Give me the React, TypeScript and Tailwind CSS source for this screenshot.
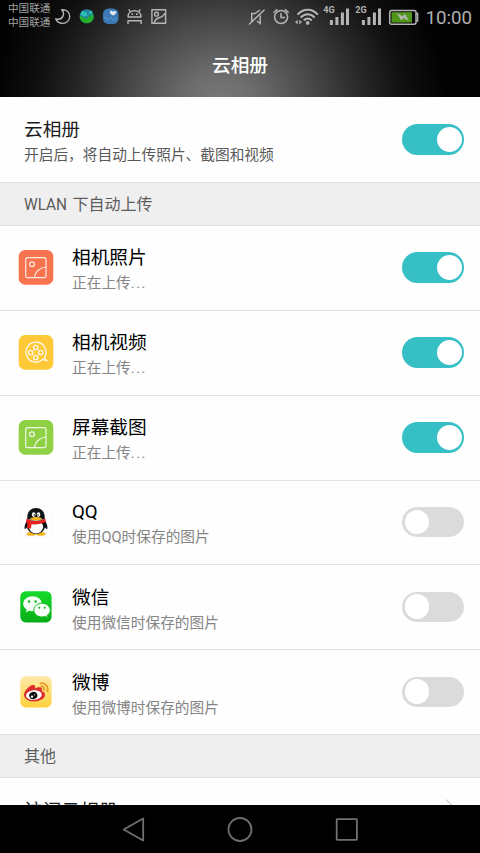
import type { ReactNode } from "react";

const CJK = "font-['Roboto','Noto_Sans_CJK_SC',sans-serif]";

function StatusBar() {
  return (
    <div className="flex h-[33px] items-start text-[#b0b0b0]">
      <div className="ml-2 w-[44px] pt-[1.500px] text-[10.600px] leading-[14.500px] whitespace-nowrap text-[#a2a2a2]">
        <div>中国联通</div>
        <div>中国联通</div>
      </div>
      <svg className="block h-[33px] w-[128px] shrink-0" viewBox="52 0 128 33" fill="none" stroke="#b5b5b5" strokeWidth="1.4" strokeLinejoin="round">
        <path d="M61.700 9.800c4.700-.5 8 2.400 8 6.600a6.900 6.900 0 0 1-7 7c-3.300 0-6-1.600-7-4.600 3.200 1 6-.1 7.200-2.400 1.100-2.200.6-4.700-1.200-6.600z" />
        <g stroke="none">
          <circle cx="86.700" cy="16.200" r="7" fill="#2484a5" />
          <path d="M80 16l3.500 1.500 2.500 1.500 6.500-5 1.200 3c-.3 3.500-3 6.200-7 6.200-3.500 0-6.200-2.500-6.900-5.500z" fill="#22b02c" />
          <path d="M82 11l4.500 1.500 1 3-3.500 1-3.500-2zM89 11.500l2.500-1 1 2.500-3 1.500z" fill="#2cc0b0" />
          <rect x="103" y="8.500" width="15.500" height="15.500" rx="5.500" fill="#3a79b6" />
          <path d="M113 15.500c-4-2-3.800-4.700-1.800-4.700 1 0 1.500.6 1.800 1 .4-.5 1-1 2-.9 2.300.3 1.700 3.200-2 4.600z" fill="#dce8ec" />
        </g>
        <path d="M104 18l2-1 2 3 3-3 2 4 2-3 2.500 2" stroke="#629fce" strokeWidth=".7" />
        <path d="M128.100 17v-.7c0-3.500 2.800-5.500 6.400-5.500s6.400 2 6.400 5.500v.7zM130.300 11.800l-1.500-2.400M138.700 11.800l1.500-2.400M128 24v-3.300h13.200V24" />
        <path d="M131.500 14.200h1.500M136 14.200h1.500" strokeWidth="1.700" />
        <path d="M151.900 9.700h13.700v13.600h-13.700zM154.300 23c.5-3.300 1.800-4.500 4.800-5.300 3.300-.8 4.800-2.300 6.300-4.600" />
        <circle cx="156.500" cy="14.200" r="1.900" />
      </svg>
      <svg className="ml-auto block h-[33px] w-[180px] shrink-0" viewBox="244 0 180 33" fill="none" stroke="#b5b5b5" strokeWidth="1.500">
        <path d="M254 20.500h-2.300v-7h3.300l5-3.500M260.200 15.500v8l-3.200-2.500M249 24.500L264.500 9.700" />
        <circle cx="281.100" cy="17" r="6.500" />
        <path d="M281 13v4.500h4M273.500 12.700l3.700-3.400M285 9.300l3.700 3.400" />
        <path d="M297.500 14.700c5.700-6.700 14.700-6.700 20.400 0M300.700 17.600c4-4.500 10-4.500 14 0M303.700 20.500c2.500-2.500 5.600-2.500 8.100 0" strokeWidth="2" />
        <circle cx="307.700" cy="22.900" r="1.900" fill="#b5b5b5" stroke="none" />
        <path d="M297.700 19.800v4.600L295 22.100zM299.300 19.800v4.600l2.700-2.300z" fill="#b5b5b5" stroke="none" />
        <g fill="#b5b5b5" stroke="none">
          <rect x="329.900" y="20" width="3" height="5" /><rect x="335.400" y="17" width="3" height="8" /><rect x="340.900" y="12.500" width="3" height="12.500" /><rect x="346" y="8.500" width="3" height="16.500" />
          <rect x="361.900" y="20" width="3" height="5" /><rect x="367.400" y="17" width="3" height="8" /><rect x="372.900" y="12.500" width="3" height="12.500" /><rect x="378" y="8.500" width="3" height="16.500" />
          <text x="323.300" y="12.500" fontSize="9" fontWeight="700">4G</text>
          <text x="355.300" y="12.500" fontSize="9" fontWeight="700">2G</text>
        </g>
        <rect x="389.700" y="10.500" width="26.300" height="13.700" rx="2" />
        <path d="M416 13.500h1.700v7.500H416" strokeWidth="1.300" />
        <rect x="391.500" y="12.200" width="20.500" height="10.300" fill="#4e9718" stroke="none" />
        <path d="M396.500 13l6.500 3.500 1.700-3 4.300 7.500-5.500-3-2 2.500z" fill="#b5b5b5" stroke="none" />
      </svg>
      <div className="w-[56px] pt-[6px] pl-[1.500px] text-[18.700px] leading-[24px]">10:00</div>
    </div>
  );
}

function Toggle({ on }: { on?: boolean }) {
  return (
    <div className={`mr-4 flex w-[62px] shrink-0 items-center rounded-full px-[2.500px] ${on ? "h-[31px] justify-end bg-[#36bfc5]" : "h-[30px] justify-start bg-[#dbdbdb]"}`}>
      <div className="h-[24.500px] w-[24.500px] rounded-full bg-white" />
    </div>
  );
}

function Picture() {
  return (
    <g fill="none" stroke="#fff" strokeOpacity=".85" strokeWidth="1.200">
      <rect x="7.700" y="7.700" width="20.300" height="20" rx="1.700" />
      <circle cx="14" cy="14.200" r="2.400" />
      <path d="M16.300 27.500c.8-5.500 5.200-9.800 11.500-10.500" />
    </g>
  );
}

const icons: Record<string, ReactNode> = {
  photo: <><rect x=".7" y=".1" width="34.600" height="34.600" rx="6.500" fill="#f8734e" /><Picture /></>,
  shot: <><rect x=".7" y=".1" width="34.600" height="34.600" rx="6.500" fill="#8fd144" /><Picture /></>,
  video: (
    <>
      <rect x=".7" y=".1" width="34.600" height="34.600" rx="6.500" fill="#ffc837" />
      <g fill="none" stroke="#fff" strokeOpacity=".9" strokeWidth="1.300">
        <path d="M28.700 25.600c-1.500 0-2.700-.5-3.700-1.300a10 10 0 1 1 1.500-1.900c.5 1.200 1.300 2.400 2.200 3.200z" />
        <circle cx="17.700" cy="12.500" r="2.200" /><circle cx="17.700" cy="22.500" r="2.200" />
        <circle cx="12.700" cy="17.500" r="2.200" /><circle cx="22.700" cy="17.500" r="2.200" />
      </g>
    </>
  ),
  qq: (
    <>
      <rect x="2.700" y="1.500" width="30.700" height="30.500" rx="6" fill="#fefefe" stroke="#f3f3f3" strokeWidth=".7" />
      <ellipse cx="13.300" cy="28.900" rx="4.700" ry="1.800" fill="#f6b51d" />
      <ellipse cx="22.700" cy="28.900" rx="4.700" ry="1.800" fill="#f6b51d" />
      <path d="M9.300 15.500c-2 2.500-3.300 6-2.600 8.500.7.300 1.800-.7 2.400-1.700.8 4.200 4.500 6.600 8.900 6.600s8.100-2.400 8.900-6.600c.6 1 1.700 2 2.400 1.700.7-2.500-.6-6-2.600-8.500z" fill="#101417" />
      <ellipse cx="18" cy="22" rx="7.100" ry="6.400" fill="#fff" />
      <path d="M9.300 14.500C8.700 7 12.300 3 18 3s9.300 4 8.700 11.500z" fill="#101417" />
      <path d="M8.700 13.500c5.500 3.400 13 3.400 18.600 0l.6 3.300c-5 2.500-9.800 3-14.400 2.500l-.5 4.300-4-.3.500-5.200-1.700-1z" fill="#e7221c" />
      <ellipse cx="15.700" cy="9.600" rx="1.800" ry="2.300" fill="#fff" /><ellipse cx="20.500" cy="9.600" rx="1.800" ry="2.300" fill="#fff" />
      <circle cx="16.300" cy="10" r=".8" fill="#111" /><circle cx="20" cy="10" r=".8" fill="#111" />
      <path d="M12 13.500c3-2 9-2 12 0-2.300 2.600-9.700 2.600-12 0z" fill="#f6b51d" />
    </>
  ),
  wechat: (
    <>
      <defs><linearGradient id="wx" x2="0" y2="1"><stop stopColor="#16da2b" /><stop offset="1" stopColor="#06ad16" /></linearGradient></defs>
      <rect x="2.300" y="1.200" width="31.300" height="31.200" rx="5.500" fill="url(#wx)" />
      <path d="M14.500 6.300c-5 0-9.300 3.300-9.300 7.500 0 2.500 1.300 4.500 3.500 5.900l-.8 2.700 3-1.600c1.200.3 2.300.5 3.600.5 5.200 0 9.300-3.300 9.300-7.500s-4.100-7.500-9.300-7.500z" fill="#f6fff6" />
      <path d="M24 13.200c-4.500 0-8.200 3-8.200 6.900s3.700 6.900 8.200 6.900c1.100 0 2.200-.2 3.200-.5l2.500 1.300-.7-2.200c2-1.300 3.300-3.300 3.300-5.500 0-3.900-3.800-6.900-8.300-6.900z" fill="#f6fff6" stroke="#10bd20" strokeWidth="1" />
      <g fill="#0bb51b"><circle cx="11" cy="11.500" r="1.200" /><circle cx="17.600" cy="11.500" r="1.200" /><circle cx="21.300" cy="17.800" r="1" /><circle cx="26.700" cy="17.800" r="1" /></g>
    </>
  ),
  weibo: (
    <>
      <defs><linearGradient id="wb" x2="0" y2="1"><stop stopColor="#ffe9a9" /><stop offset="1" stopColor="#ffd13d" /></linearGradient></defs>
      <rect x="2.300" y="1.200" width="31.300" height="31.200" rx="5.500" fill="url(#wb)" />
      <path d="M6 19.500c0-3.500 6.800-11 10.300-9.200 1.200.7.900 2 .5 3.200 2.700-1.200 6-1.700 6.900-.2.500.9.300 1.800-.1 2.900 2.200.5 3.400 1.800 3.400 3.600 0 4-5 6.600-11.300 6.600C10 26.400 6 23.700 6 19.500z" fill="#dc2c2c" />
      <ellipse cx="15.900" cy="20.100" rx="7.900" ry="4.800" fill="#fff" transform="rotate(-6 15.900 20.100)" />
      <ellipse cx="15.300" cy="20.500" rx="4.100" ry="3.600" fill="#090909" transform="rotate(-15 15.300 20.500)" />
      <circle cx="14" cy="21.600" r="1.200" fill="#fff" /><circle cx="16.600" cy="19.800" r=".6" fill="#fff" />
      <path d="M22.500 8.300c4.700-.7 8.300 3.300 6.900 7.900M23 11.500c2.300-.3 3.700 1.500 3.100 3.700" fill="none" stroke="#e99a20" strokeWidth="1.700" strokeLinecap="round" />
    </>
  ),
};

interface RowProps {
  icon: string;
  title: string;
  sub: string;
  on?: boolean;
  size: string;
  iconTop?: string;
  textTop?: string;
  toggleBox?: string;
}

function Row({ icon, title, sub, on, size, iconTop = "mt-6", textTop = "pt-[19px]", toggleBox = "h-[83px]" }: RowProps) {
  return (
    <div className={`flex shrink-0 border-[#e4e4e4] ${size}`}>
      <svg className={`ml-[18px] block h-[36px] w-[36px] shrink-0 ${iconTop}`} viewBox="0 0 36 36">{icons[icon]}</svg>
      <div className={`ml-[18px] flex-1 whitespace-nowrap ${textTop}`}>
        <div className="text-[18.700px] leading-[26px] text-black">{title}</div>
        <div className="text-[14.700px] leading-[24px] text-[#858585]">
          {sub}
          {on && <span className="tracking-[1.500px]">...</span>}
        </div>
      </div>
      <div className={`flex items-center ${toggleBox}`}><Toggle on={on} /></div>
    </div>
  );
}

function Section({ children }: { children: ReactNode }) {
  return (
    <div className="h-[44px] shrink-0 border-y border-t-[#dedede] border-b-[#e4e4e4] bg-[#efefef] pt-px pl-6 text-[16px] leading-[42px] text-[#5c5c5c]">
      {children}
    </div>
  );
}

export default function App() {
  return (
    <div className={`flex h-[853px] w-[480px] flex-col overflow-hidden bg-[#fefefe] ${CJK}`}>
      <header className="h-[97px] shrink-0 bg-black bg-[radial-gradient(ellipse_210px_190px_at_46%_108%,#7a7a7a_0%,#6b6b6b_18%,#4b4b4b_42%,#272727_68%,#0f0f0f_88%,#020202_108%)]">
        <StatusBar />
        <h1 className="pt-[18px] text-center text-[18.700px] leading-[30px] font-medium text-white">云相册</h1>
      </header>
      <main className="flex min-h-0 flex-1 flex-col overflow-hidden">
        <div className="flex h-[85px] shrink-0 items-center justify-between pl-6">
          <div className="pt-[5px]">
            <div className="text-[18.700px] leading-[26px] text-[#1c1c1c]">云相册</div>
            <div className="text-[14.700px] leading-[24px] text-[#595959]">开启后，将自动上传照片、截图和视频</div>
          </div>
          <Toggle on />
        </div>
        <Section><span className="inline-block w-[48.500px] origin-left scale-x-[.96]">WLAN</span>下自动上传</Section>
        <Row icon="photo" title="相机照片" sub="正在上传" on size="h-[85px] border-b" />
        <Row icon="video" title="相机视频" sub="正在上传" on size="h-[85px] border-b" />
        <Row icon="shot" title="屏幕截图" sub="正在上传" on size="h-[85px] border-b" />
        <Row icon="qq" title="QQ" sub="使用QQ时保存的图片" size="h-[84px] border-b" textTop="pt-[18px]" toggleBox="h-[82px]" />
        <Row icon="wechat" title="微信" sub="使用微信时保存的图片" size="h-[85px] border-b" iconTop="mt-[25px]" textTop="pt-[20px]" />
        <Row icon="weibo" title="微博" sub="使用微博时保存的图片" size="h-[84px]" iconTop="mt-[24.500px]" textTop="pt-[20px]" />
        <Section>其他</Section>
        <div className="flex h-[85px] shrink-0 items-start justify-between pt-[20px] pr-[23px] pl-6">
          <div className="text-[18.700px] leading-[26px] text-[#1c1c1c]">访问云相册</div>
          <svg className="mt-px h-[16px] w-[12px]" viewBox="0 0 12 16" fill="none" stroke="#b5b5b5"><path d="M1 .5l7.500 7.500L1 15.500" /></svg>
        </div>
      </main>
      <nav className="h-12 shrink-0 bg-black">
        <svg className="block h-12 w-full" viewBox="0 0 480 48" fill="none" stroke="#707070" strokeWidth="1.800" strokeLinejoin="round">
          <path d="M143.200 13.500v22L123.700 24.500z" />
          <circle cx="240" cy="24.500" r="11.500" />
          <rect x="336.700" y="14.200" width="20.200" height="20.600" rx=".5" />
        </svg>
      </nav>
    </div>
  );
}
